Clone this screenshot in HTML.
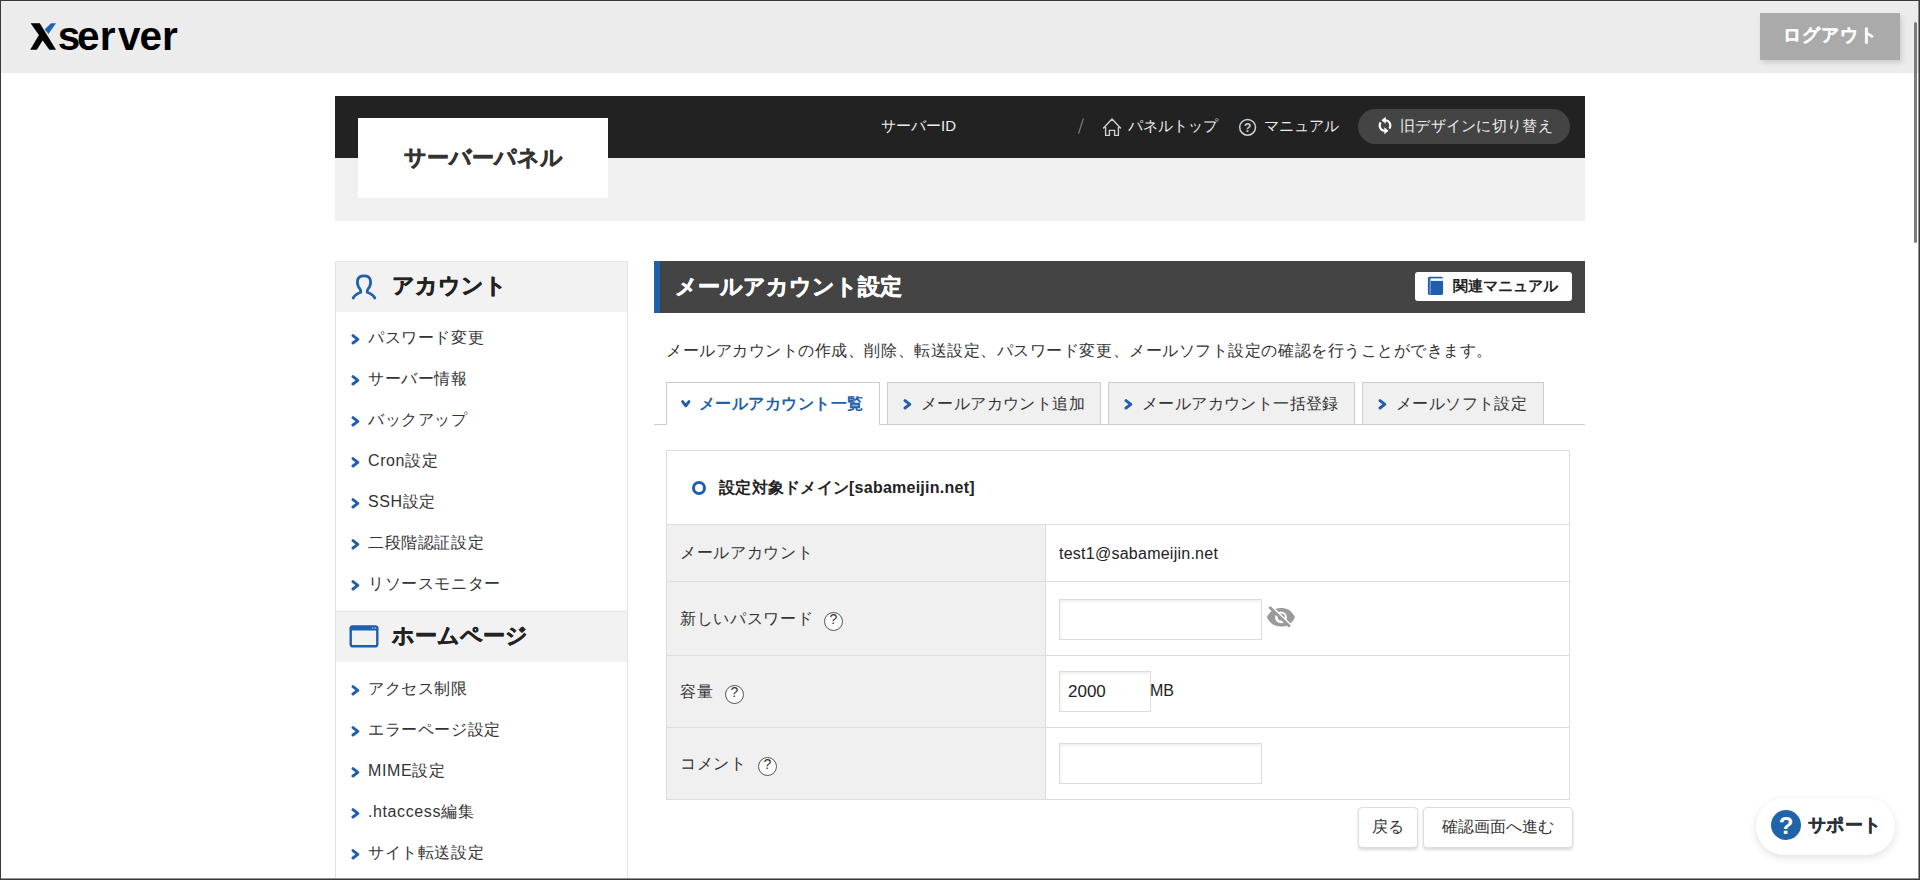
<!DOCTYPE html>
<html lang="ja">
<head>
<meta charset="utf-8">
<title>サーバーパネル</title>
<style>
*{box-sizing:border-box;margin:0;padding:0}
html,body{width:1920px;height:880px;overflow:hidden;background:#fff}
body{font-family:"Liberation Sans",sans-serif;font-size:16px;color:#333;position:relative}
.abs{position:absolute}
.frame{position:absolute;left:0;top:0;width:1920px;height:880px;border:1px solid #3a3a3a;box-shadow:inset -1px -1px 0 rgba(58,58,58,.55);z-index:100;pointer-events:none}
.hdr{position:absolute;left:0;top:0;width:1920px;height:73px;background:#ececec}
.logout{position:absolute;left:1760px;top:13px;width:140px;height:47px;background:#aaa;color:#fff;font-weight:bold;font-size:18px;letter-spacing:1.2px;text-indent:1px;line-height:45px;text-align:center;box-shadow:2px 3px 5px rgba(0,0,0,.13)}
.sbar{position:absolute;left:1914px;top:22px;width:2.5px;height:221px;background:#7c7c7c;border-radius:2px}
.ph-black{position:absolute;left:335px;top:96px;width:1250px;height:62px;background:#222}
.ph-grey{position:absolute;left:335px;top:158px;width:1250px;height:63px;background:#f0f0f0}
.ph-box{position:absolute;left:358px;top:118px;width:250px;height:80px;background:#fff;font-weight:bold;font-size:22.4px;line-height:80px;text-align:center;color:#333}
.nav{position:absolute;top:116px;height:20px;line-height:20px;color:#eee;font-size:15px;white-space:nowrap}
.pill{position:absolute;left:1358px;top:109px;width:212px;height:35px;border-radius:18px;background:#444;color:#eee;font-size:15px;line-height:34px;white-space:nowrap}
.side{position:absolute;left:335px;top:261px;width:293px;height:640px;border-left:1px solid #e3e3e3;border-right:1px solid #e3e3e3;border-top:1px solid #e8e8e8}
.side h2{height:50px;background:#f2f2f2;font-size:22.4px;font-weight:bold;color:#222;position:relative;line-height:47px;padding-left:56px}
.side h2.b{border-top:1px solid #e3e3e3;height:51px}
.side ul{list-style:none;padding:6px 0 6px}
.side ul.u2{padding-top:7px}
.side li{height:41px;line-height:39px;position:relative;padding-left:32px;font-size:16px;color:#333;white-space:nowrap;letter-spacing:0.6px}
.title{position:absolute;left:654px;top:261px;width:931px;height:52px;background:#444;border-left:6px solid #1f5fad;color:#fff;font-size:22.2px;font-weight:bold;line-height:52px;padding-left:15px}
.relman{position:absolute;left:1415px;top:272px;width:157px;height:29px;background:#fff;border-radius:3px;color:#222;font-weight:bold;font-size:14.9px;line-height:29px;padding-left:38px;white-space:nowrap}
.desc{position:absolute;left:666px;top:341px;line-height:20px;font-size:16px;color:#333;white-space:nowrap;letter-spacing:0.54px}
.tabline{position:absolute;left:654px;top:424px;width:931px;height:1px;background:#ccc}
.tab{position:absolute;top:382px;height:42px;background:#f0f0f0;border:1px solid #ccc;border-bottom:none;line-height:42px;font-size:16px;color:#333;white-space:nowrap;padding-left:33px;letter-spacing:0.4px}
.tab.on{background:#fff;color:#1f5fad;font-weight:bold;height:43px;z-index:2;padding-left:32px;letter-spacing:0.45px}
.tbl{position:absolute;left:666px;top:450px;width:904px;height:350px;border:1px solid #ddd}
.row{position:absolute;left:0;width:902px;border-top:1px solid #ddd}
.row .l{position:absolute;left:0;top:0;bottom:0;width:379px;background:#f0f0f0;border-right:1px solid #ddd}
.lab{position:absolute;left:13px;line-height:20px;font-size:16px;color:#333;white-space:nowrap;letter-spacing:0.7px}
.help{position:absolute;width:19px;height:19px;border:1px solid #555;border-radius:50%;font-size:14px;line-height:13px;text-align:center;color:#333;background:#fff;font-weight:normal}
.inp{position:absolute;background:#fff;border:1px solid #ddd;box-shadow:inset 1px 2px 2px rgba(0,0,0,.05)}
.btn{position:absolute;top:807px;height:41px;background:#fff;border:1px solid #ddd;border-radius:4px;box-shadow:0 2px 3px rgba(0,0,0,.15);line-height:37px;text-align:center;font-size:16px;color:#333;white-space:nowrap}
.support{position:absolute;left:1756px;top:798px;width:139px;height:57px;border-radius:29px;background:#fff;box-shadow:0 3px 8px rgba(0,0,0,.12);}
.chv{position:absolute;left:14.5px;top:15.1px}
.bd{-webkit-text-stroke:0.5px currentColor}
.bs{-webkit-text-stroke:0.25px currentColor}
</style>
</head>
<body>
<div class="hdr"></div>
<!-- logo -->
<svg class="abs" style="left:26px;top:18px" width="160" height="36" viewBox="0 0 160 36">
  <polygon points="4.6,5.2 13.8,5.2 30,31.7 23.3,31.7" fill="#000"/>
  <polygon points="4.2,31.7 10.8,31.7 19.2,18.6 15,13.6" fill="#000"/>
  <polygon points="25,5.2 30,5.2 22.5,16 18.7,11.5" fill="#1f63b5"/>
  <text y="31.7" font-family="Liberation Sans" font-weight="bold" font-size="40.5" fill="#000" x="31.7 51.0 73.8 91.9 113.4 136.1">server</text>
</svg>
<div class="logout bs">ログアウト</div>
<div class="sbar"></div>

<div class="ph-black"></div>
<div class="ph-grey"></div>
<div class="ph-box bd">サーバーパネル</div>
<div class="nav" style="left:881px">サーバーID</div>
<svg class="abs" style="left:1075px;top:116px" width="12" height="20" viewBox="0 0 12 20"><line x1="8.4" y1="2.4" x2="3.6" y2="17.6" stroke="#7a7a7a" stroke-width="1.3"/></svg>
<svg class="abs" style="left:1100px;top:116px" width="24" height="22" viewBox="0 0 24 22"><path d="M3.5 12 L12 3 L20.5 12 M5.6 9.8 V19.4 H9.4 V14.4 H14.6 V19.4 H18.4 V9.8" fill="none" stroke="#d0d0d0" stroke-width="1.4" stroke-linecap="round" stroke-linejoin="round"/></svg>
<div class="nav" style="left:1128px">パネルトップ</div>
<svg class="abs" style="left:1237px;top:117px" width="22" height="22" viewBox="0 0 22 22"><circle cx="10.6" cy="10.3" r="7.9" fill="none" stroke="#cfcfcf" stroke-width="1.5"/><text x="10.6" y="15" text-anchor="middle" font-family="Liberation Sans" font-weight="bold" font-size="12" fill="#d0d0d0">?</text></svg>
<div class="nav" style="left:1264px">マニュアル</div>
<div class="pill"><svg class="abs" style="left:15.7px;top:6px" width="22" height="22" viewBox="0 0 22 22"><g transform="translate(11 10.5) scale(0.88) translate(-11 -10.5)"><path d="M11 4.5 A6 6 0 0 1 15.9 14" fill="none" stroke="#fff" stroke-width="2.4"/><path d="M6.1 7 A6 6 0 0 0 11 16.5" fill="none" stroke="#fff" stroke-width="2.4"/><polygon points="7,4.5 11.8,0.5 11.8,8.5" fill="#fff"/><polygon points="15,16.5 10.2,12.5 10.2,20.5" fill="#fff"/></g></svg><span style="position:absolute;left:42px;letter-spacing:0.3px">旧デザインに切り替え</span></div>

<div class="side">
  <h2 class="bd"><svg class="abs" style="left:10px;top:6px" width="36" height="36" viewBox="0 0 36 36"><path d="M7.2 30 C8.7 27 11.5 25.5 14.8 24.3 C15.4 22 13.6 20.6 12.4 18.6 C11.3 16.6 11.3 13.6 11.6 12.1 C12.3 9.2 14.8 7.9 18 7.9 C21.2 7.9 23.7 9.2 24.4 12.1 C24.7 13.6 24.7 16.6 23.6 18.6 C22.4 20.6 20.6 22 21.2 24.3 C24.5 25.5 27.3 27 28.8 30" fill="none" stroke="#1f5fad" stroke-width="2.8" stroke-linecap="round" stroke-linejoin="round"/></svg>アカウント</h2>
  <ul>
    <li><svg class="chv" width="12" height="14" viewBox="0 0 12 14"><polyline points="2,2.6 6.8,6.3 2,10" fill="none" stroke="#1f5fad" stroke-width="2.9" stroke-linecap="round" stroke-linejoin="round"/></svg>パスワード変更</li><li><svg class="chv" width="12" height="14" viewBox="0 0 12 14"><polyline points="2,2.6 6.8,6.3 2,10" fill="none" stroke="#1f5fad" stroke-width="2.9" stroke-linecap="round" stroke-linejoin="round"/></svg>サーバー情報</li><li><svg class="chv" width="12" height="14" viewBox="0 0 12 14"><polyline points="2,2.6 6.8,6.3 2,10" fill="none" stroke="#1f5fad" stroke-width="2.9" stroke-linecap="round" stroke-linejoin="round"/></svg>バックアップ</li><li><svg class="chv" width="12" height="14" viewBox="0 0 12 14"><polyline points="2,2.6 6.8,6.3 2,10" fill="none" stroke="#1f5fad" stroke-width="2.9" stroke-linecap="round" stroke-linejoin="round"/></svg>Cron設定</li><li><svg class="chv" width="12" height="14" viewBox="0 0 12 14"><polyline points="2,2.6 6.8,6.3 2,10" fill="none" stroke="#1f5fad" stroke-width="2.9" stroke-linecap="round" stroke-linejoin="round"/></svg>SSH設定</li><li><svg class="chv" width="12" height="14" viewBox="0 0 12 14"><polyline points="2,2.6 6.8,6.3 2,10" fill="none" stroke="#1f5fad" stroke-width="2.9" stroke-linecap="round" stroke-linejoin="round"/></svg>二段階認証設定</li><li><svg class="chv" width="12" height="14" viewBox="0 0 12 14"><polyline points="2,2.6 6.8,6.3 2,10" fill="none" stroke="#1f5fad" stroke-width="2.9" stroke-linecap="round" stroke-linejoin="round"/></svg>リソースモニター</li>
  </ul>
  <h2 class="b bd"><svg class="abs" style="left:12.5px;top:12.5px" width="32" height="25" viewBox="0 0 32 25"><rect x="1.7" y="1.7" width="26.6" height="19.6" rx="2.4" fill="none" stroke="#1f5fad" stroke-width="2.4"/><rect x="0.5" y="0.5" width="29" height="4.9" rx="2.4" fill="#1f5fad"/><circle cx="23.6" cy="3" r="0.85" fill="#a9c3e6"/><circle cx="26.4" cy="3" r="0.85" fill="#a9c3e6"/></svg>ホームページ</h2>
  <ul class="u2">
    <li><svg class="chv" width="12" height="14" viewBox="0 0 12 14"><polyline points="2,2.6 6.8,6.3 2,10" fill="none" stroke="#1f5fad" stroke-width="2.9" stroke-linecap="round" stroke-linejoin="round"/></svg>アクセス制限</li><li><svg class="chv" width="12" height="14" viewBox="0 0 12 14"><polyline points="2,2.6 6.8,6.3 2,10" fill="none" stroke="#1f5fad" stroke-width="2.9" stroke-linecap="round" stroke-linejoin="round"/></svg>エラーページ設定</li><li><svg class="chv" width="12" height="14" viewBox="0 0 12 14"><polyline points="2,2.6 6.8,6.3 2,10" fill="none" stroke="#1f5fad" stroke-width="2.9" stroke-linecap="round" stroke-linejoin="round"/></svg>MIME設定</li><li><svg class="chv" width="12" height="14" viewBox="0 0 12 14"><polyline points="2,2.6 6.8,6.3 2,10" fill="none" stroke="#1f5fad" stroke-width="2.9" stroke-linecap="round" stroke-linejoin="round"/></svg>.htaccess編集</li><li><svg class="chv" width="12" height="14" viewBox="0 0 12 14"><polyline points="2,2.6 6.8,6.3 2,10" fill="none" stroke="#1f5fad" stroke-width="2.9" stroke-linecap="round" stroke-linejoin="round"/></svg>サイト転送設定</li>
  </ul>
</div>

<div class="title bd">メールアカウント設定</div>
<div class="relman"><svg class="abs" style="left:12px;top:4px" width="18" height="20" viewBox="0 0 18 20"><rect x="0.9" y="0.7" width="15.2" height="18.2" rx="1.6" fill="#1f5fad"/><rect x="3.5" y="2.4" width="12.6" height="2.5" fill="#fff"/><rect x="2.6" y="2.4" width="1.2" height="16" fill="#7aa3d6"/></svg>関連マニュアル</div>
<div class="desc">メールアカウントの作成、削除、転送設定、パスワード変更、メールソフト設定の確認を行うことができます。</div>
<div class="tabline"></div>
<div class="tab on" style="left:666px;width:214px"><svg class="abs" style="left:13px;top:15.4px" width="14" height="12" viewBox="0 0 14 12"><polyline points="2.6,3.6 5.8,7.8 9,3.6" fill="none" stroke="#1f5fad" stroke-width="2.9" stroke-linecap="round" stroke-linejoin="round"/></svg>メールアカウント一覧</div>
<div class="tab" style="left:887px;width:214px"><svg class="chv" width="12" height="14" viewBox="0 0 12 14"><polyline points="2,2.6 6.8,6.3 2,10" fill="none" stroke="#1f5fad" stroke-width="2.9" stroke-linecap="round" stroke-linejoin="round"/></svg>メールアカウント追加</div>
<div class="tab" style="left:1108px;width:247px"><svg class="chv" width="12" height="14" viewBox="0 0 12 14"><polyline points="2,2.6 6.8,6.3 2,10" fill="none" stroke="#1f5fad" stroke-width="2.9" stroke-linecap="round" stroke-linejoin="round"/></svg>メールアカウント一括登録</div>
<div class="tab" style="left:1362px;width:182px"><svg class="chv" width="12" height="14" viewBox="0 0 12 14"><polyline points="2,2.6 6.8,6.3 2,10" fill="none" stroke="#1f5fad" stroke-width="2.9" stroke-linecap="round" stroke-linejoin="round"/></svg>メールソフト設定</div>

<div class="tbl">
  <div class="abs" style="left:25px;top:30px;width:14px;height:14px;border:3px solid #1f5fad;border-radius:50%"></div>
  <div class="abs" style="left:52px;top:27px;line-height:20px;font-weight:bold;color:#222;letter-spacing:0.25px">設定対象ドメイン[sabameijin.net]</div>
  <div class="row" style="top:73px;height:57px"><div class="l"></div>
    <div class="lab" style="top:18px">メールアカウント</div>
    <div class="abs" style="left:392px;top:19px;line-height:20px;color:#222;letter-spacing:0.25px">test1@sabameijin.net</div>
  </div>
  <div class="row" style="top:130px;height:74px"><div class="l"></div>
    <div class="lab" style="top:27px">新しいパスワード</div>
    <div class="help" style="left:157px;top:30px">?</div>
  </div>
  <div class="row" style="top:204px;height:72px"><div class="l"></div>
    <div class="lab" style="top:26px">容量</div>
    <div class="help" style="left:58px;top:29px">?</div>
  </div>
  <div class="row" style="top:276px;height:72px"><div class="l"></div>
    <div class="lab" style="top:26px">コメント</div>
    <div class="help" style="left:91px;top:29px">?</div>
  </div>
</div>
<div class="inp" style="left:1059px;top:599px;width:203px;height:41px"></div>
<svg class="abs" style="left:1265px;top:604px" width="32" height="26" viewBox="0 0 32 26"><path d="M1.8 13.3 C5.5 5.9 10.8 4 16 4 C21.2 4 26.5 5.9 30 13.3 C26.5 20.7 21.2 22.6 16 22.6 C10.8 22.6 5.5 20.7 1.8 13.3 Z" fill="#9a9a9a"/><circle cx="16" cy="13.3" r="5.9" fill="#fff"/><circle cx="16.3" cy="13" r="3.6" fill="#9a9a9a"/><line x1="6.3" y1="2.5" x2="25.1" y2="20.5" stroke="#fff" stroke-width="2.4"/><line x1="5.2" y1="3.8" x2="24" y2="21.8" stroke="#9a9a9a" stroke-width="2.9" stroke-linecap="round"/></svg>
<div class="inp" style="left:1059px;top:671px;width:92px;height:41px"><span class="abs" style="left:8px;top:10px;line-height:20px;color:#222;font-size:17px">2000</span></div>
<div class="abs" style="left:1150px;top:681px;line-height:20px;color:#222">MB</div>
<div class="inp" style="left:1059px;top:743px;width:203px;height:41px"></div>

<div class="btn" style="left:1358px;width:60px">戻る</div>
<div class="btn" style="left:1423px;width:150px">確認画面へ進む</div>

<div class="support">
  <div class="abs" style="left:15px;top:12px;width:30px;height:30px;border-radius:50%;background:#1f63a8;color:#fff;font-weight:bold;font-size:24px;line-height:31px;text-align:center">?</div>
  <div class="abs bs" style="left:52px;top:16px;line-height:22px;font-size:18px;font-weight:bold;color:#2a3038;letter-spacing:0.3px">サポート</div>
</div>

<div class="frame"></div>
</body>
</html>
